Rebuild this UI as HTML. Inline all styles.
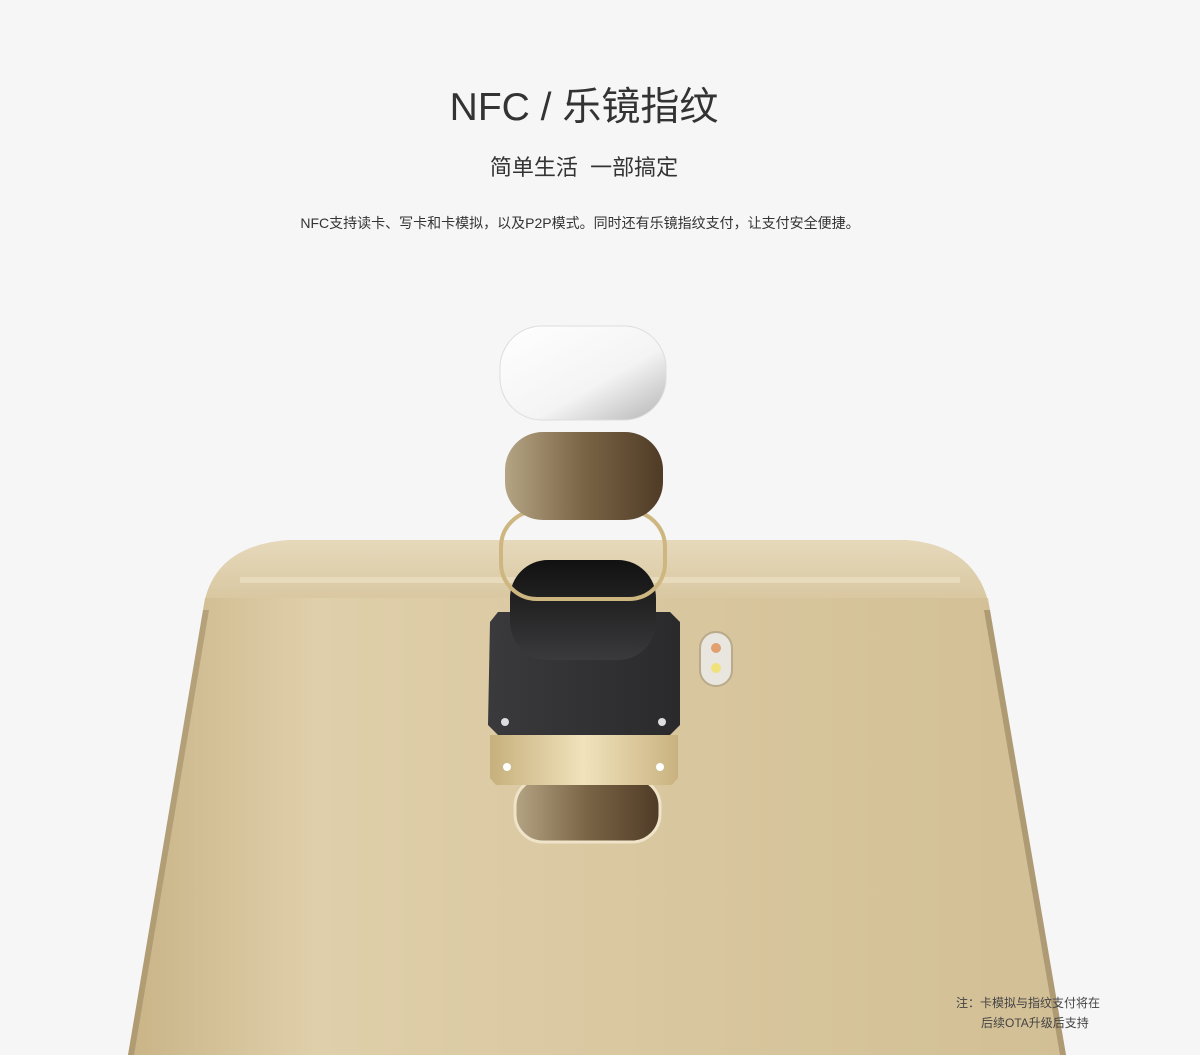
<!DOCTYPE html>
<html><head><meta charset="utf-8"><style>
html,body{margin:0;padding:0;width:1200px;height:1055px;overflow:hidden;background:#f6f6f6;font-family:"Liberation Sans","Noto Sans CJK SC",sans-serif;color:#333}
.t{position:absolute;left:-16px;width:1200px;text-align:center}
svg{position:absolute;left:0;top:0}
</style></head><body>
<svg width="1200" height="1055" viewBox="0 0 1200 1055">
<defs>
<linearGradient id="gold" x1="0" x2="1" y1="0" y2="0">
<stop offset="0" stop-color="#c9b487"/><stop offset="0.2" stop-color="#dfcfaa"/><stop offset="0.6" stop-color="#d8c69e"/><stop offset="1" stop-color="#d2bf95"/></linearGradient>
<linearGradient id="top" x1="0" x2="0" y1="0" y2="1">
<stop offset="0" stop-color="#e6d9bb"/><stop offset="1" stop-color="#d6c49c"/></linearGradient>
<linearGradient id="brown" x1="0" x2="1"><stop offset="0" stop-color="#b4a484"/><stop offset="0.5" stop-color="#7a6446"/><stop offset="1" stop-color="#4f3b26"/></linearGradient>
<linearGradient id="white" x1="0" x2="1" y1="0" y2="1"><stop offset="0" stop-color="#fff"/><stop offset="0.6" stop-color="#f4f4f4"/><stop offset="1" stop-color="#b5b5b5"/></linearGradient>
<linearGradient id="blk" x1="0" x2="0" y1="0" y2="1"><stop offset="0" stop-color="#111"/><stop offset="1" stop-color="#3a3a3c"/></linearGradient>
<linearGradient id="plate" x1="0" x2="1"><stop offset="0" stop-color="#3a3a3c"/><stop offset="1" stop-color="#2a2a2c"/></linearGradient>
<linearGradient id="gp" x1="0" x2="1"><stop offset="0" stop-color="#c6b07c"/><stop offset="0.5" stop-color="#f0e2bc"/><stop offset="1" stop-color="#c9b27f"/></linearGradient>
</defs>
<path d="M128 1055 L203 610 Q212 545 290 540 L905 540 Q978 545 990 610 L1066 1055 Z" fill="url(#gold)"/>
<path d="M203 610 Q212 545 290 540 L905 540 Q978 545 990 610 L988 598 L205 598 Z" fill="url(#top)"/>
<rect x="240" y="577" width="720" height="6" fill="#ece0c4" opacity="0.7"/>
<path d="M990 610 L1066 1055 L1060 1055 L984 610 Z" fill="#8a7652" opacity="0.5"/>
<path d="M203 610 L128 1055 L134 1055 L209 610 Z" fill="#8a7652" opacity="0.4"/>
<rect x="700" y="632" width="32" height="54" rx="16" fill="#e9e6df" stroke="#b9ab8a" stroke-width="2"/>
<circle cx="716" cy="648" r="5" fill="#e0a070"/><circle cx="716" cy="668" r="5" fill="#f0e27a"/>
<rect x="515" y="778" width="145" height="64" rx="28" fill="url(#brown)" stroke="#efe4c9" stroke-width="3"/>
<path d="M490 735 L678 735 L678 778 L672 785 L496 785 L490 778 Z" fill="url(#gp)"/>
<circle cx="507" cy="767" r="4" fill="#fff"/><circle cx="660" cy="767" r="4" fill="#fff"/>
<path d="M498 612 L670 612 L680 622 L680 725 L670 735 L498 735 L488 725 L490 622 Z" fill="url(#plate)"/>
<circle cx="505" cy="722" r="4" fill="#ddd"/><circle cx="662" cy="722" r="4" fill="#ddd"/>
<rect x="510" y="560" width="146" height="100" rx="38" fill="url(#blk)"/>
<rect x="501" y="511" width="164" height="88" rx="36" fill="none" stroke="#cdb680" stroke-width="4"/>
<rect x="505" y="432" width="158" height="88" rx="38" fill="url(#brown)"/>
<rect x="500" y="326" width="166" height="94" rx="42" fill="url(#white)" stroke="#ddd" stroke-width="1"/>
</svg>
<div class="t" style="top:84px;font-size:39px;line-height:48px">NFC / 乐镜指纹</div>
<div class="t" style="top:153px;font-size:22px;line-height:30px">简单生活&nbsp;&nbsp;一部搞定</div>
<div class="t" style="top:213px;font-size:14px;line-height:20px;left:-20px">NFC支持读卡、写卡和卡模拟，以及P2P模式。同时还有乐镜指纹支付，让支付安全便捷。</div>
<div style="position:absolute;left:956px;top:993px;font-size:12px;line-height:20px;color:#444">注：卡模拟与指纹支付将在<br><span style="padding-left:25px">后续OTA升级后支持</span></div>
</body></html>
